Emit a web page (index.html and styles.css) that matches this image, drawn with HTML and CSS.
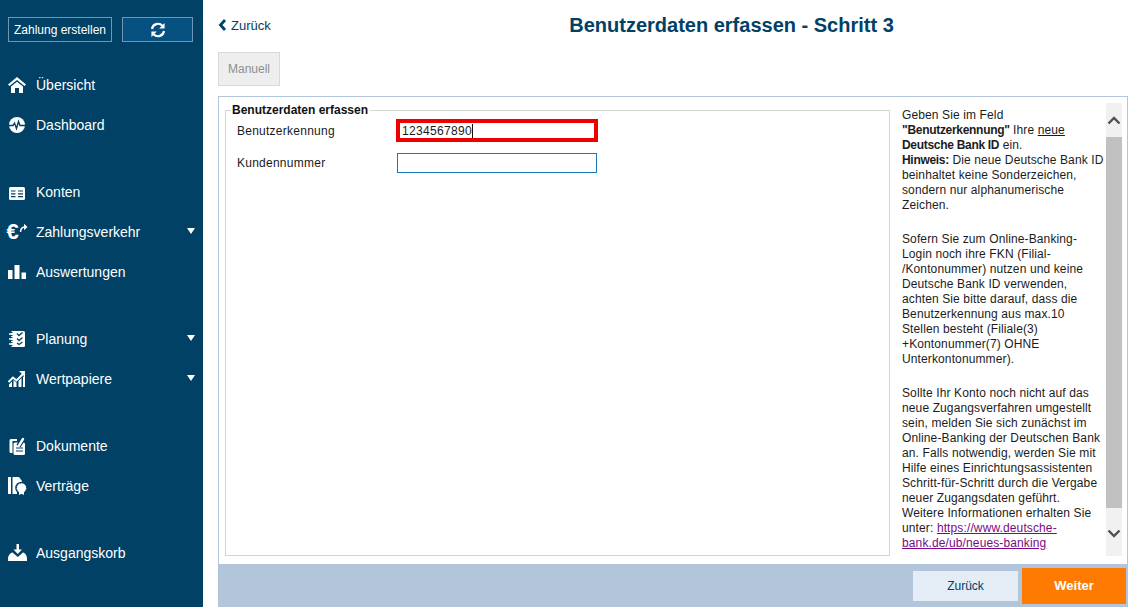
FILE: index.html
```html
<!DOCTYPE html>
<html lang="de">
<head>
<meta charset="utf-8">
<title>Benutzerdaten erfassen</title>
<link rel="stylesheet" href="styles.css">
</head>
<body>
<aside class="sidebar">
  <div class="top-actions">
    <button class="side-btn create">Zahlung erstellen</button>
    <button class="side-btn sync" aria-label="Aktualisieren">
      <svg width="16" height="16" viewBox="0 0 16 16"><path d="M2 7a6 6 0 0 1 10.4-3.2M14 9a6 6 0 0 1-10.4 3.2" fill="none" stroke="#fff" stroke-width="2.200"/><path d="M14.600 1v5.400H9.200zM1.400 15V9.600h5.400z" fill="#fff"/></svg>
    </button>
  </div>
  <nav class="nav">
    <div class="group">
      <a class="item"><svg class="ico" viewBox="0 0 20 20"><path d="M9 2 0 9.500 1.500 11 9 5l7.500 6L18 9.500zM3 11.500l6-4.700 6 4.700V18h-4v-5H7v5H3z" fill="#fff"/></svg>Übersicht</a>
      <a class="item"><svg class="ico" viewBox="0 0 20 20"><circle cx="9" cy="10" r="8" fill="#fff"/><path d="M0 10.500h5l1.500-2.500 2 5.500 2-7 1.500 4H18" fill="none" stroke="#004165" stroke-width="1.400"/></svg>Dashboard</a>
    </div>
    <div class="group">
      <a class="item"><svg class="ico" viewBox="0 0 20 20"><rect x="1" y="5" width="16" height="13" rx="1.500" fill="#fff"/><path d="M3 9h4.500M3 11.800h4.500M3 14.600h4.500M10 9h5M10 11.800h5M10 14.600h5" stroke="#004165" stroke-width="1.200"/></svg>Konten</a>
      <a class="item has-sub"><svg class="ico" viewBox="0 0 20 20"><text class="euro" x="-1.500" y="17">€</text><path d="M12.500 10c.2-3 1.700-4.800 4-5" fill="none" stroke="#fff" stroke-width="1.500"/><path d="M16 1.800 19.500 5 16 8.200z" fill="#fff"/></svg>Zahlungsverkehr<span class="caret"></span></a>
      <a class="item"><svg class="ico" viewBox="0 0 20 20"><path d="M0 8h4.500v9H0zM6.500 3h5v14h-5zM13.500 10.500H18V17h-4.500z" fill="#fff"/></svg>Auswertungen</a>
    </div>
    <div class="group">
      <a class="item has-sub"><svg class="ico" viewBox="0 0 20 20"><rect x="3" y="2" width="14" height="16" rx="1.500" fill="#fff"/><path d="M1 5h5M1 10h5M1 15h5" stroke="#fff" stroke-width="1.500"/><path d="M1 3.500h3.500M1 6.500h3.500M1 8.500h3.500M1 11.500h3.500M1 13.500h3.500M1 16.500h3.500" stroke="#004165" stroke-width="1"/><path d="M9 4.500l2 2 3.500-3M9 9.500l2 2 3.500-3M9 14l2 1.500 3.500-2.500" fill="none" stroke="#004165" stroke-width="1.300"/></svg>Planung<span class="caret"></span></a>
      <a class="item has-sub"><svg class="ico" viewBox="0 0 20 20"><path d="M.5 13 5 8.500l3.500 3L15 5" fill="none" stroke="#fff" stroke-width="2"/><path d="M11 2h6v6z" fill="#fff"/><path d="M1 18v-2.500l3-3V18zM5.500 18v-7l3 2.500V18zM10.500 18v-6l3-3v9zM15 18V8l2-1.500V18z" fill="#fff"/></svg>Wertpapiere<span class="caret"></span></a>
    </div>
    <div class="group">
      <a class="item"><svg class="ico" viewBox="0 0 20 20"><path d="M3 3h6v2H4.500v12H3a1.500 1.500 0 0 1-1.500-1.500v-11A1.500 1.500 0 0 1 3 3z" fill="#fff"/><rect x="5.500" y="6.500" width="11.500" height="12.500" rx="1.500" fill="#fff"/><path d="M8 12h7M8 15h7" stroke="#004165" stroke-width="1.200"/><path d="M10.500 10 15 3" stroke="#004165" stroke-width="5"/><path d="M11 9.500 15 3" stroke="#fff" stroke-width="2.400" stroke-linecap="round"/></svg>Dokumente</a>
      <a class="item"><svg class="ico" viewBox="0 0 20 20"><path d="M0 1h3v17H0zM4.500 1H11l3 4v4H4.500zM4.500 9H9v9H4.500z" fill="#fff"/><circle cx="13.500" cy="12" r="6.300" fill="#004165"/><circle cx="13.500" cy="12" r="4.500" fill="#fff" stroke="#fff" stroke-width=".8" stroke-dasharray="1.500 1"/><path d="M11 15h5v4l-2.500-1.200L11 19z" fill="#fff"/></svg>Verträge</a>
    </div>
    <div class="group">
      <a class="item"><svg class="ico" viewBox="0 0 20 20"><path d="M8.500 1H11v5.500h3L9.750 11 5.500 6.500h3z" fill="#fff"/><path d="M0 18v-2.500C0 13 2 10 4.500 9.500L9.750 14 15 9.500c2.500.5 4 3.500 4 6V18z" fill="#fff"/></svg>Ausgangskorb</a>
    </div>
  </nav>
</aside>
<main class="main">
  <header class="head">
    <a class="back"><svg width="9" height="12" viewBox="0 0 9 12"><path d="M7 1 2.500 6 7 11" fill="none" stroke="#004165" stroke-width="2.800"/></svg>Zurück</a>
    <h1 class="title">Benutzerdaten erfassen - Schritt 3</h1>
  </header>
  <div class="tabs"><button class="tab">Manuell</button></div>
  <section class="panel">
    <div class="panel-body">
      <fieldset class="form">
        <legend>Benutzerdaten erfassen</legend>
        <div class="row first">
          <label class="lbl">Benutzerkennung</label>
          <div class="value filled">1234567890<span class="cursor"></span></div>
        </div>
        <div class="row">
          <label class="lbl">Kundennummer</label>
          <div class="value"></div>
        </div>
      </fieldset>
      <div class="help-wrap">
        <div class="help">
          <p>Geben Sie im Feld<br><b>"Benutzerkennung"</b> Ihre <u>neue</u><br><b>Deutsche Bank ID</b> ein.<br><b>Hinweis:</b> Die neue Deutsche Bank ID<br>beinhaltet keine Sonderzeichen,<br>sondern nur alphanumerische<br>Zeichen.</p>
          <p>Sofern Sie zum Online-Banking-<br>Login noch ihre FKN (Filial-<br>/Kontonummer) nutzen und keine<br>Deutsche Bank ID verwenden,<br>achten Sie bitte darauf, dass die<br>Benutzerkennung aus max.10<br>Stellen besteht (Filiale(3)<br>+Kontonummer(7) OHNE<br>Unterkontonummer).</p>
          <p>Sollte Ihr Konto noch nicht auf das<br>neue Zugangsverfahren umgestellt<br>sein, melden Sie sich zunächst im<br>Online-Banking der Deutschen Bank<br>an. Falls notwendig, werden Sie mit<br>Hilfe eines Einrichtungsassistenten<br>Schritt-für-Schritt durch die Vergabe<br>neuer Zugangsdaten geführt.<br>Weitere Informationen erhalten Sie<br>unter: <a class="link">https://www.deutsche-<br>bank.de/ub/neues-banking</a></p>
        </div>
        <div class="scrollbar">
          <span class="arrow"><svg width="14" height="9" viewBox="0 0 14 9"><path d="M1.500 7.500 7 2l5.500 5.500" fill="none" stroke="#505050" stroke-width="2.400"/></svg></span>
          <span class="thumb"></span>
          <span class="arrow end"><svg width="14" height="9" viewBox="0 0 14 9"><path d="M1.500 1.500 7 7l5.500-5.500" fill="none" stroke="#505050" stroke-width="2.400"/></svg></span>
        </div>
      </div>
    </div>
    <footer class="foot">
      <button class="btn secondary">Zurück</button>
      <button class="btn primary">Weiter</button>
    </footer>
  </section>
</main>
</body>
</html>
```
FILE: styles.css
```css
* { box-sizing: border-box; }
html, body { height: 100%; }
body {
  margin: 0;
  display: flex;
  height: 607px;
  overflow: hidden;
  background: #fff;
  font-family: "Liberation Sans", Arial, sans-serif;
  font-size: 12px;
  color: #1a1a1a;
}
.sidebar {
  width: 203px;
  flex: none;
  background: #004165;
  color: #fff;
}
.top-actions {
  display: flex;
  gap: 10px;
  padding: 17px 0 0 8px;
}
.side-btn {
  height: 25px;
  border: 1px solid #6f97b3;
  color: #fff;
  font: 12px "Liberation Sans", Arial, sans-serif;
  padding: 0;
  display: flex;
  align-items: center;
  justify-content: center;
}
.create { width: 104px; background: #004165; }
.sync { width: 71px; background: #06517f; }
.nav { padding-top: 23px; display: flex; flex-direction: column; gap: 27px; }
.item {
  height: 40px;
  display: flex;
  align-items: center;
  padding: 0 6px 0 8px;
  font-size: 14px;
  color: #fff;
}
.ico { width: 20px; height: 20px; flex: none; margin-right: 8px; overflow: visible; }
.euro { font: bold 22px "Liberation Sans", Arial, sans-serif; fill: #fff; }
.caret {
  margin-left: auto;
  width: 0;
  height: 0;
  border-left: 4px solid transparent;
  border-right: 4px solid transparent;
  border-top: 6px solid #fff;
  margin-right: 2px;
  margin-top: -2px;
}
.main {
  flex: 1;
  min-width: 0;
  padding: 0 3px 0 15px;
  display: flex;
  flex-direction: column;
}
.head {
  height: 52px;
  display: flex;
  align-items: center;
  padding-bottom: 2px;
}
.back {
  display: flex;
  align-items: center;
  gap: 4px;
  font-size: 13px;
  color: #004165;
  width: 100px;
}
.title {
  flex: 1;
  margin: 0 0 0 -100px;
  text-align: center;
  font-size: 20px;
  font-weight: bold;
  color: #004165;
  padding-left: 117px;
}
.tabs { height: 44px; }
.tab {
  width: 62px;
  height: 34px;
  background: #eee;
  border: 1px solid #d9d9d9;
  color: #8f8f8f;
  font: 12px "Liberation Sans", Arial, sans-serif;
  padding: 0;
}
.panel {
  flex: 1;
  min-height: 0;
  border: 1px solid #b3c5db;
  border-bottom: 0;
  display: flex;
  flex-direction: column;
}
.panel-body {
  flex: 1;
  min-height: 0;
  display: flex;
  padding: 6px 5px 8px 6px;
}
.form {
  width: 665px;
  flex: none;
  margin: 0;
  padding: 0 0 0 11px;
  border: 1px solid #d5d5d5;
}
.form legend {
  margin-left: -6px;
  padding: 0 2px 0 1px;
  font-weight: bold;
  font-size: 12px;
  color: #111;
  line-height: 14px;
}
.row {
  display: flex;
  align-items: center;
  height: 20px;
  margin-top: 11px;
}
.row.first { margin-top: 2px; height: 23px; }
.lbl { width: 160px; flex: none; letter-spacing: .25px; }
.value {
  width: 200px;
  height: 20px;
  border: 1px solid #1a78b8;
  display: flex;
  align-items: center;
  padding-left: 2px;
}
.filled {
  width: 202px;
  height: 23px;
  margin-left: -1px;
  border: 4px solid #ec0000;
  padding-left: 2px;
  letter-spacing: .32px;
}
.cursor { width: 1px; height: 14px; background: #111; }
.help-wrap {
  flex: 1;
  min-width: 0;
  display: flex;
  padding-left: 12px;
}
.help {
  width: 204px;
  flex: none;
  overflow: hidden;
  white-space: nowrap;
  line-height: 15px;
  padding-top: 5px;
  color: #1c1c1c;
  letter-spacing: .12px;
}
.help b { letter-spacing: -.3px; }
.help p { margin: 0 0 19px; }
.link { color: #7a0a85; text-decoration: underline; }
.scrollbar {
  width: 16px;
  flex: none;
  background: #f1f1f1;
  display: flex;
  flex-direction: column;
}
.arrow { height: 34px; display: flex; align-items: center; justify-content: center; }
.arrow.end { height: auto; flex: 1; padding-top: 2px; }
.thumb { height: 371px; background: #c1c1c1; }
.foot {
  height: 43px;
  flex: none;
  background: #b3c5db;
  display: flex;
  align-items: center;
  justify-content: flex-end;
  gap: 4px;
  padding-right: 1px;
}
.btn {
  width: 104px;
  border: 0;
  padding: 0;
  font: 12px "Liberation Sans", Arial, sans-serif;
}
.secondary { height: 30px; width: 105px; background: #e4ecf5; color: #004165; }
.primary { height: 36px; background: #ff7a00; color: #fff; font-weight: bold; font-size: 13px; }
```
